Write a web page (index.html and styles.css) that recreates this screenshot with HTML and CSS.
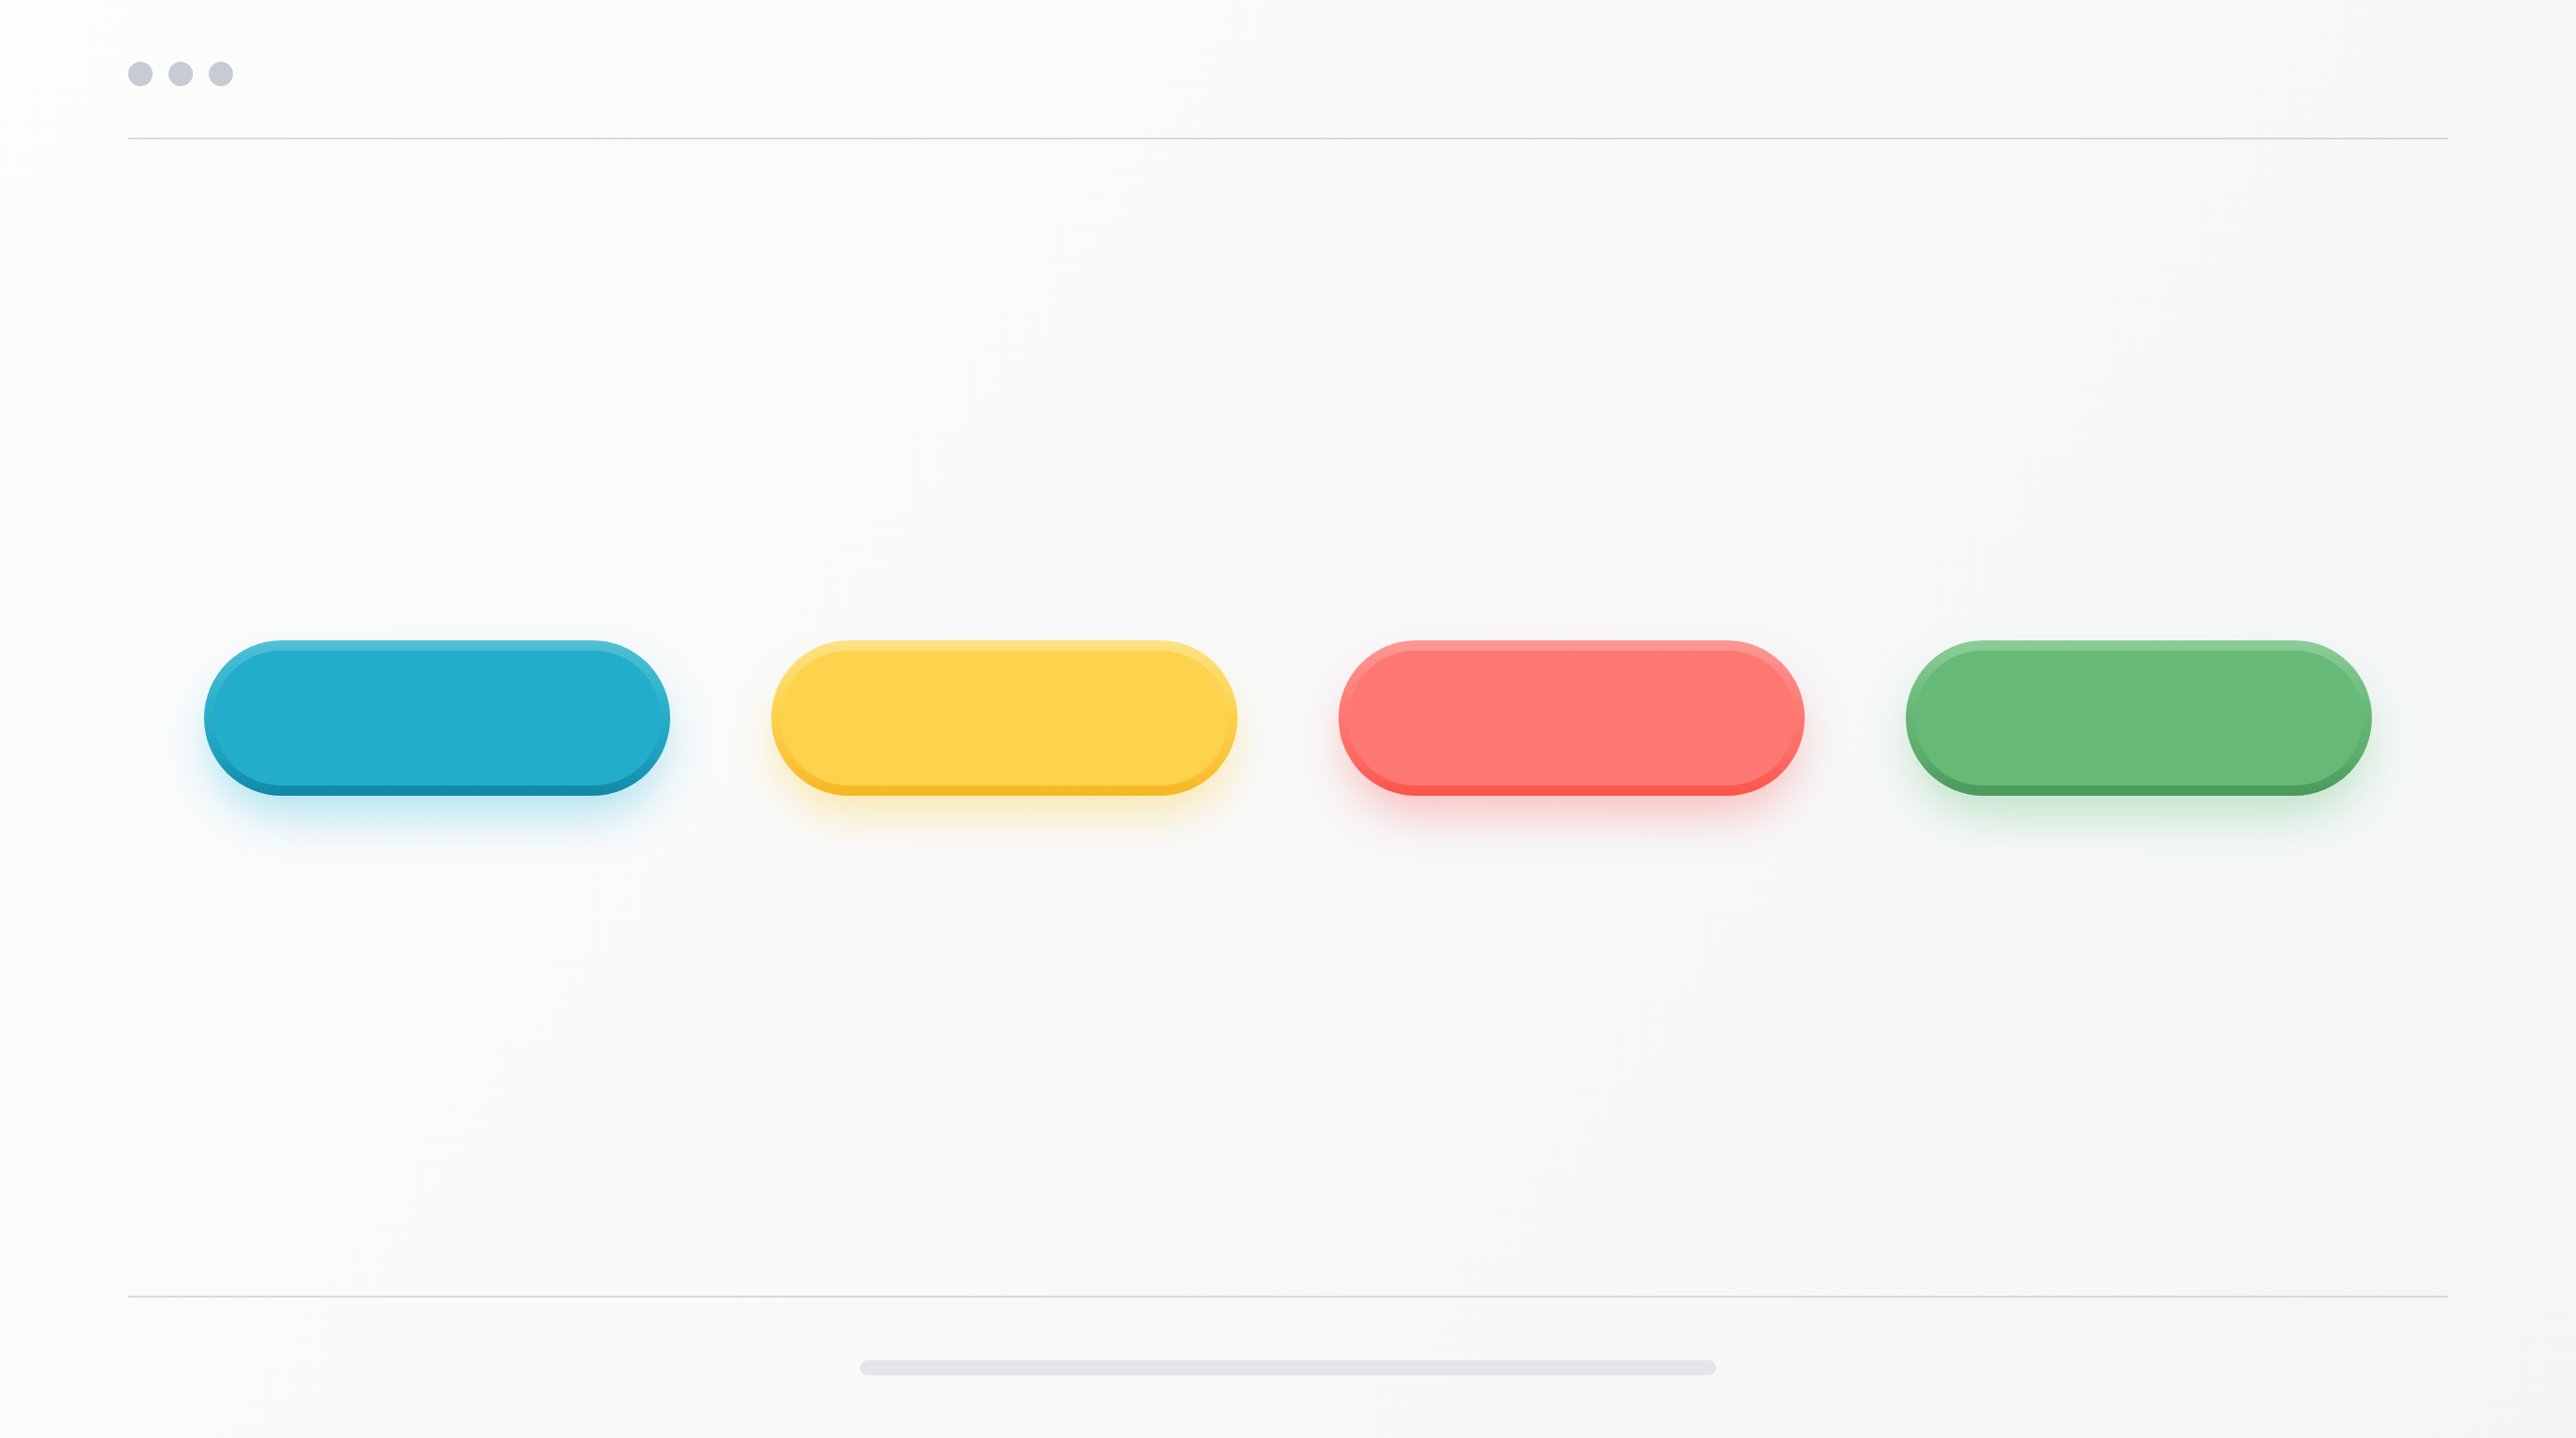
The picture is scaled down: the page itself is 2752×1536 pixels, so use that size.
FILE: index.html
```html
<!DOCTYPE html>
<html lang="en">
<head>
<meta charset="utf-8">
<title>Pills</title>
<link rel="stylesheet" href="styles.css">
</head>
<body>
<div class="frame">
  <header class="top">
    <span class="dot"></span>
    <span class="dot"></span>
    <span class="dot"></span>
  </header>
  <main class="stage">
    <div class="pill pill-blue"><div class="face"></div></div>
    <div class="pill pill-yellow"><div class="face"></div></div>
    <div class="pill pill-red"><div class="face"></div></div>
    <div class="pill pill-green"><div class="face"></div></div>
  </main>
  <footer class="bottom">
    <div class="scrollbar"></div>
  </footer>
</div>
</body>
</html>
```
FILE: styles.css
```css
html, body {
  margin: 0;
  padding: 0;
}
body {
  width: 2752px;
  height: 1536px;
  overflow: hidden;
  font-family: "Liberation Sans", Arial, sans-serif;
  background: linear-gradient(125deg, #fdfdfd 0%, #f8f9fa 50%, #f3f5f7 100%);
}
.frame {
  height: 1536px;
  display: flex;
  flex-direction: column;
  padding: 0 137px;
  box-sizing: border-box;
}
.top {
  height: 149px;
  padding-top: 11px;
  box-sizing: border-box;
  display: flex;
  align-items: center;
  gap: 17px;
  border-bottom: 2px solid #d6d9dd;
}
.dot {
  width: 26px;
  height: 26px;
  border-radius: 50%;
  background: #c7cbd3;
}
.stage {
  flex: 1;
  display: flex;
  align-items: center;
  justify-content: center;
  gap: 108px;
  border-bottom: 2px solid #d6d9dd;
}
.pill {
  width: 498px;
  height: 166px;
  box-sizing: border-box;
  padding: 11px 10px;
  border-radius: 83px;
  display: flex;
}
.face {
  flex: 1;
  border-radius: 72px;
}
.pill-blue {
  background: linear-gradient(180deg, #52bfd7 0%, #2cb1cb 40%, #1d9fbd 75%, #1088a8 100%);
  box-shadow: 0 26px 50px -8px rgba(60, 190, 225, 0.42);
}
.pill-blue .face {
  background: #22aeca;
}
.pill-yellow {
  background: linear-gradient(180deg, #fde184 0%, #fdd553 40%, #fbc63a 75%, #f7b624 100%);
  box-shadow: 0 26px 50px -8px rgba(255, 205, 60, 0.42);
}
.pill-yellow .face {
  background: #fdd24d;
}
.pill-red {
  background: linear-gradient(180deg, #fd9893 0%, #fe7c77 40%, #fd6a63 75%, #fb5449 100%);
  box-shadow: 0 26px 50px -8px rgba(255, 100, 95, 0.4);
}
.pill-red .face {
  background: #fe7873;
}
.pill-green {
  background: linear-gradient(180deg, #8dcd98 0%, #6abb7a 40%, #5aad6b 75%, #4a985b 100%);
  box-shadow: 0 26px 50px -8px rgba(100, 195, 120, 0.4);
}
.pill-green .face {
  background: #67b978;
}
.bottom {
  height: 150px;
  padding-top: 67px;
  box-sizing: border-box;
  display: flex;
  justify-content: center;
}
.scrollbar {
  width: 914px;
  height: 16px;
  border-radius: 8px;
  background: #e3e5e8;
}
```
